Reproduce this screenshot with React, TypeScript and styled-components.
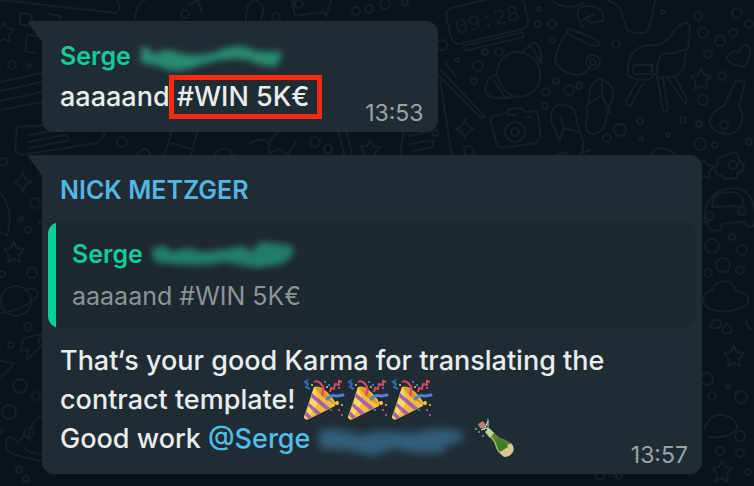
import React from "react";
import styled, { createGlobalStyle } from "styled-components";

const GlobalStyle = createGlobalStyle`
  *, *::before, *::after { box-sizing: border-box; }
  body { margin: 0; background: #0b131a; }
`;

const Chat = styled.main`
  position: relative;
  isolation: isolate;
  min-height: 100vh;
  overflow: hidden;
  display: flex;
  flex-direction: column;
  align-items: flex-start;
  gap: 23px;
  padding: 21px 52px 12px 42px;
  background: #0b131a;
  color: #e9edef;
  font-family: Inter, "Liberation Sans", sans-serif;
`;

const Wallpaper = styled.svg`
  position: absolute;
  inset: 0;
  z-index: -1;
  width: 100%;
  height: 100%;
  fill: none;
  stroke: #152027;
  stroke-width: 2;
  stroke-linecap: round;
  stroke-linejoin: round;
`;

const ClockDigits = styled.text`
  font: 22px "Liberation Mono", monospace;
  fill: #152027;
  stroke: none;
`;

const Bubble = styled.article<{ $wide?: boolean }>`
  position: relative;
  width: ${(p) => (p.$wide ? "100%" : "fit-content")};
  max-width: 100%;
  padding: 19px 6px 16px;
  border-radius: 0 12px 12px 12px;
  background: #202c33;
`;

const Tail = styled.svg`
  position: absolute;
  top: 0;
  left: -14px;
  width: 15px;
  height: 22px;
  fill: #202c33;
`;

const Author = styled.h2<{ $color: string }>`
  display: flex;
  align-items: center;
  gap: 6px;
  margin: 0;
  padding: 0 12px;
  color: ${(p) => p.$color};
  font-size: 25px;
  font-weight: 600;
  line-height: 32px;
`;

const Body = styled.p<{ $gap: number }>`
  margin: ${(p) => p.$gap}px 0 0;
  padding: 0 12px;
  font-size: 27px;
  font-weight: 500;
  line-height: 39px;
`;

const TimeSpace = styled.span`
  display: inline-block;
  width: 110px;
`;

const Time = styled.time`
  position: absolute;
  right: 14px;
  bottom: 7px;
  color: #9aa3a9;
  font-size: 23px;
  line-height: 24px;
`;

const Highlight = styled.mark`
  position: relative;
  background: none;
  color: inherit;

  &::after {
    content: "";
    position: absolute;
    inset: -5px -12px -6px -8px;
    border: 5px solid #f9290c;
  }
`;

const Quote = styled.blockquote`
  margin: 16px 0 0;
  padding: 16px 4px 16px 12px;
  border-radius: 12px;
  background: linear-gradient(to right, #06cf9c 8px, #1e282f 8px);
`;

const QuoteText = styled.p`
  margin: 10px 0 0;
  padding: 0 12px;
  color: #8d9399;
  font-size: 25px;
  line-height: 32px;
`;

const Mention = styled.a`
  color: #53bdeb;
  text-decoration: none;
`;

const Redaction = styled.svg`
  width: 156px;
  height: 32px;
  overflow: visible;
  vertical-align: middle;
`;

const EmojiArt = styled.svg`
  width: 44px;
  height: 42px;
  margin: -10px 0 -6px;
  vertical-align: middle;
`;

const rings = [
  [538, 24, 3], [552, 24, 4], [552, 40, 3], [485, 52, 3], [499, 52, 4], [478, 66, 5], [474, 81, 3],
  [457, 60, 2], [442, 45, 5], [556, 81, 3], [546, 92, 4], [569, 90, 5], [579, 86, 3], [545, 106, 3],
  [616, 44, 4], [663, 12, 2], [698, 16, 4], [703, 33, 5], [720, 41, 5], [733, 33, 4], [737, 13, 5],
  [749, 24, 4], [708, 54, 4], [722, 76, 4], [703, 100, 5], [683, 120, 3], [699, 124, 3], [620, 130, 6],
  [607, 138, 4], [640, 121, 3], [641, 139, 2], [668, 135, 2], [700, 144, 6], [715, 145, 3], [749, 142, 3],
  [469, 151, 5], [435, 133, 3], [539, 9, 2], [712, 246, 7], [742, 250, 5], [732, 237, 3], [723, 265, 7],
  [740, 270, 4], [708, 273, 4], [707, 379, 6], [712, 396, 4], [741, 397, 6], [728, 387, 2], [740, 436, 5],
  [720, 451, 4], [740, 453, 4], [748, 472, 3], [600, 476, 4], [619, 476, 3], [185, 14, 4], [356, 11, 4],
  [369, 9, 4], [385, 4, 5], [405, 2, 3], [299, 4, 4], [276, 17, 4], [12, 65, 4], [29, 66, 2],
  [122, 142, 5], [315, 142, 5], [328, 149, 4], [3, 162, 4], [35, 203, 5], [21, 219, 2], [28, 230, 3],
  [32, 273, 5], [2, 274, 3], [28, 327, 4], [11, 345, 3], [20, 386, 7], [36, 396, 4], [9, 412, 7],
  [19, 470, 3], [26, 479, 3], [1, 431, 2], [41, 222, 2],
];

const star = "M0-10 3-4 10-3 5 3 6 10 0 7-6 10-5 3-10-3-3-4Z";
const sparkle = "M0-10Q1-2 9 0 1 2 0 10-2 2-9 0-2-2 0-10Z";
const stars: Array<[number, number, string]> = [
  [701, 79, star], [734, 356, star], [722, 471, star], [14, 252, star], [370, 150, star],
  [704, 169, star], [465, 129, sparkle], [23, 182, sparkle], [4, 32, star],
];

function ChatWallpaper() {
  return (
    <Wallpaper viewBox="0 0 754 486" preserveAspectRatio="xMidYMid slice" aria-hidden="true">
      {rings.map(([x, y, r]) => (
        <circle key={`${x}-${y}`} cx={x} cy={y} r={r} />
      ))}
      {stars.map(([x, y, d]) => (
        <path key={`${x}-${y}`} d={d} transform={`translate(${x} ${y})`} />
      ))}
      {/* alarm clock */}
      <g transform="rotate(-13 487 20)">
        <rect x="448" y="0" width="79" height="37" rx="8" />
        <rect x="458" y="40" width="61" height="5" rx="2" />
        <ClockDigits x="454" y="27">09:28</ClockDigits>
      </g>
      {/* croissant */}
      <path d="M497 73Q498 55 515 52 529 51 538 64 544 79 535 90 526 99 513 96 499 89 497 73ZM522 52l6-5q5 0 7 5l5 11M528 47q5-7 10-2l3 8v10M496 75q-8 2-9 6l-2 9q2 8 12 8l8 1M493 80l12 17q6 2 8-1" />
      {/* mug */}
      <path d="M568 31Q556 47 555 62 562 74 579 75 586 74 590 66M568 28l25 10q7 3 6 8l-8-1-22-10q-4-3-1-7Z" />
      <circle cx="593" cy="62" r="7" />
      <circle cx="593" cy="62" r="3" />
      <path d="M583 27Q574 13 580 8q10-5 21 2 4 5 2 11l-12 2q-7-7-8-3Q588 16 594 15M554 2q14 9 29 1M607 0q14 5 15 14l5 16q9 5 19 2 5-4 9-32" />
      {/* chair */}
      <path d="M628 76q-2-28 20-31 17 2 25-13 15-17 17-3l-2 20-14 4-12 1q-5 6-5 18l-8 8-14-1ZM634 65h18v9h-18q-3-6 0-9ZM662 55q-6 4-5 22 22 3 27-10l2-14M638 80l-12 21q0 5 5 4l12-22M657 77l6 33q3 4 5-1l-5-31M667 77l17 25q4 3 2-4l-11-22" />
      {/* heart */}
      <path d="M745 67q-19-3-18-10 4-8 12-5 4-11 10-5 4 5-4 20Z" />
      {/* guitar */}
      <path d="m736 80 9 2-6 24q5 6 3 15-5 17-21 12-15-5-10-16 3-7 13-11Z" />
      <circle cx="724" cy="125" r="4" />
      {/* camera */}
      <path d="m493 116 15-3 1-4 13-1 3 4 11-1q3 3 4 26l-4 6-34 5q-5-2-6-6l-5-20q-1-5 2-6Z" />
      <circle cx="515" cy="132" r="10" />
      <circle cx="515" cy="132" r="4" />
      <path d="M508 115h9M528 117h3" />
      {/* sandals */}
      <path d="m588 105 2-16q7-16 19-5 8 9 0 22l-4 18q-5 13-16 9-6-5-1-19l-2-8 16-11 8 18M602 83v14M560 141l-8-17q-4-20 11-19 13 0 14 17l6 20q2 12-7 15M560 139l4-11 14 4M561 118l3 12" />
      {/* pencil and folded page */}
      <path d="m438 75 43 43 4-1-45-48M440 80l12 77M445 62l11 15" />
      {/* retro van */}
      <path d="M704 223q0-33 29-35 25 1 21 38l-7 1-2-6-23 3-2 7-9-1q-5-4-3-10ZM712 207q0-15 17-15 14 0 14 10l-1 4Z" />
      <circle cx="710" cy="216" r="4" />
      <circle cx="742" cy="211" r="4" />
      {/* flower */}
      <path d="m729 154 5-2 4 3 1 6 5 4-1 6-5 2-2 6-7-1-4 1-4-4-5-1-1-6 3-4-1-5 5-2Z" />
      <circle cx="733" cy="165" r="4" />
      <path d="M709 120q6 13 20 14 12-1 15-14" opacity=".2" />
      {/* clouds and drops */}
      <path d="M704 303q-4-8 9-14 4-10 17-7l7 9q17 3 9 15-19 9-37 3ZM704 430q6-17 19-15 15 4 14 14-7 10-29 8M714 320q10-1 6 7-7 3-10-1ZM727 323q9 9 0 11-7-1-4-7ZM747 320q-3 5 4 9" />
      {/* planet, lightning, rocket */}
      <circle cx="16" cy="301" r="15" />
      <path d="M1 307Q-7 315 8 312 39 302 38 292q-4-6-13-2M24 338l18-4-4 9 4 2-15 15 1-10-8 1ZM0 361l14 2-8 10-6 4M0 193q15 17 7 43l-7-4M8 438q4-3 10 5l6-8 5 4q0-17 13-23M8 438q-8 14 15 19l18 4M24 447q4 7 18 7" />
      <circle cx="29" cy="433" r="5" />
      {/* letters and fragments between messages */}
      <path d="m20 13 12 2-1 11-11-2ZM49 14l12 2-1 5M38 37l-11-3-2 17 9 2M0 0l116 13q6-5 1-13M135 20q0-15 10-20M50 41l-6 4M0 82l42-9M0 91l42-9M0 101l42-9M0 110l42-8" />
      <path d="m17 127 32-2M17 127l-2 24 6 4 76-12 8-8-7-7M28 135l30-5M28 142l38-7q5 4 0 6l-36 7M137 154q10-10 13 1M172 130l-7 24M198 130l-7 24M171 143l21 6M215 154q10-12 18 1M250 143q15-8 20 2M279 131q-14 11-9 22l10-4 7 6 9-13M338 130l6 24M346 130l6 24M404 130l-4 24M409 136l24-6M410 144l23-4v7l-20 4M188 5l10-5 4 13M246 20q0-20 10-20 12 6 4 20M292 0l3 16 29-4 2 5 5-17" />
      <path d="M651 154q9-12 24 0M558 154l10-1M580 154l10-4" />
    </Wallpaper>
  );
}

const smears = {
  first:
    "M4 7 12 8 17 15Q29 6 42 13 65 18 84 10 105 2 117 11L146 12 139 27Q124 26 110 20 89 17 67 24 36 36 22 26L4 23Z",
  second:
    "M3 11 14 7 24 14Q39 7 54 14L70 12 93 8 105 14Q105 4 116 4L144 8Q148 17 133 26L109 30 76 24Q52 29 25 26L5 24Z",
  mention:
    "M8 7Q16 3 31 5L50 10 68 6 104 8Q123 3 139 4L153 8 152 16 138 20 131 28 104 28 85 23 64 31 38 25 10 24Z",
};

function HiddenName({ shape, color }: { shape: keyof typeof smears; color: string }) {
  return (
    <Redaction viewBox="0 0 156 32" aria-hidden="true">
      <filter id={`soft-${shape}`} x="-20%" y="-50%" width="140%" height="200%">
        <feGaussianBlur stdDeviation={shape === "mention" ? 4 : 3} />
      </filter>
      <path d={smears[shape]} fill={color} filter={`url(#soft-${shape})`} />
    </Redaction>
  );
}

function PartyPopper() {
  return (
    <EmojiArt viewBox="0 0 44 42" role="img" aria-label="Party popper">
      <path d="M11 8Q16 6 24 13 34 22 32 27L6 40Q2 42 1 38Z" fill="#f0bd3e" />
      <path d="M11 8 6 26 1 38q1 3 4 2L16 22Z" fill="#ffd966" />
      <path d="m9 14 18 15-4 2L8 18ZM6 24l12 10-4 2-9-9ZM3 32l6 6-4 2-3-4Z" fill="#a862a4" />
      <path d="M13 8q8 1 19 18-7-4-13-9-6-6-6-9Z" fill="#d99a2b" />
      <path d="M19 17Q23 9 17 4q-3-3-6-1M19 15Q22 7 16 3" fill="none" stroke="#e0466a" strokeWidth="2" />
      <path d="M24 20q5-5 9-3 3 0 7-1" fill="none" stroke="#4d82d5" strokeWidth="3" strokeLinecap="round" />
      <path d="m27 13 1-4 3 1 1-5 4 1 0-4 3 1" fill="none" stroke="#cf4a6c" strokeWidth="2" />
      <path d="m5 1-3 2 3 2-2 3 4 2" fill="none" stroke="#2f6cb8" strokeWidth="2" />
      <g fill="#f5ca52"><circle cx="9" cy="6" r="1" /><circle cx="34" cy="24" r="2" /><circle cx="39" cy="26" r="1" /><circle cx="24" cy="8" r="1" /></g>
      <g fill="#cf629b"><circle cx="36" cy="31" r="1" /><circle cx="39" cy="36" r="1" /><circle cx="36" cy="9" r="1" /></g>
      <g fill="#4e8fcf"><circle cx="28" cy="31" r="1" /><circle cx="22" cy="3" r="1" /><circle cx="26" cy="6" r="1" /></g>
    </EmojiArt>
  );
}

function Champagne() {
  return (
    <EmojiArt viewBox="0 0 44 42" role="img" aria-label="Champagne bottle">
      <path d="m12 14 4-3 10 9q10 2 13 10 1 7-8 9-8-3-11-14Z" fill="#5b7f35" />
      <path d="m11 14 4-4 5 5-4 5Z" fill="#c5cfa0" />
      <path d="m25 32 12-7q4 4 2 9-3 5-9 5-4-3-5-7Z" fill="#d9c596" />
      <path d="m21 23 6-2q5 3 7 8l-8 5q-4-5-5-11Z" fill="#3f7f24" />
      <path d="m17 18 4 6 3 9 6 5" stroke="#b4c284" strokeWidth="1" fill="none" />
      <path d="m4 6 5-3 3 4-3 4-3-1Z" fill="#b9826b" />
      <path d="m10 12 4-9 0 9M7 12l6-2 2 3" fill="none" stroke="#cfe4dc" strokeWidth="1" />
      <g fill="#60adb8"><circle cx="2" cy="11" r="1" /><circle cx="5" cy="14" r="1" /><circle cx="14" cy="2" r="1" /><circle cx="9" cy="18" r="1" /></g>
    </EmojiArt>
  );
}

function BubbleTail() {
  return (
    <Tail viewBox="0 0 15 22" aria-hidden="true">
      <path d="M2 0H15V22L1 3Q-1 0 2 0Z" />
    </Tail>
  );
}

export default function App() {
  return (
    <>
      <GlobalStyle />
      <Chat>
        <ChatWallpaper />
        <Bubble>
          <BubbleTail />
          <Author $color="#12cd9b">
            Serge <HiddenName shape="first" color="#258b70" />
          </Author>
          <Body $gap={5}>
            aaaaand <Highlight>#WIN 5K€</Highlight>
            <TimeSpace />
          </Body>
          <Time dateTime="13:53">13:53</Time>
        </Bubble>
        <Bubble $wide>
          <BubbleTail />
          <Author $color="#53b6e3">NICK METZGER</Author>
          <Quote>
            <Author as="h3" $color="#12cd9b">
              Serge <HiddenName shape="second" color="#237d68" />
            </Author>
            <QuoteText>aaaaand #WIN 5K€</QuoteText>
          </Quote>
          <Body $gap={13}>
            That‘s your good Karma for translating the contract template! <PartyPopper />
            <PartyPopper />
            <PartyPopper />
            <br />
            Good work <Mention href="#serge">@Serge</Mention>
            <HiddenName shape="mention" color="#315f7b" /> <Champagne />
          </Body>
          <Time dateTime="13:57">13:57</Time>
        </Bubble>
      </Chat>
    </>
  );
}
